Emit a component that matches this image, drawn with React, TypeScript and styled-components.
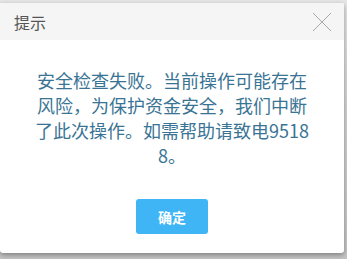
import styled, { createGlobalStyle } from 'styled-components'

const GlobalStyle = createGlobalStyle`
  html, body {
    margin: 0;
    padding: 0;
    background: #cfcfcf;
    font-family: "Microsoft YaHei", "Noto Sans CJK SC", sans-serif;
  }
`

export default function App() {
  return (
    <>
      <GlobalStyle />
      <Overlay>
        <Dialog>
          <Header>
            <HeaderTitle>提示</HeaderTitle>
            <CloseButton aria-label="关闭">
              <svg width="20" height="20" viewBox="0 0 20 20">
                <path d="M1 1 L19 19 M19 1 L1 19" stroke="#a8a8a8" strokeWidth="1" fill="none" />
              </svg>
            </CloseButton>
          </Header>
          <Body>
            <Message>
              安全检查失败。当前操作可能存在风险，为保护资金安全，我们中断了此次操作。如需帮助请致电95188。
            </Message>
            <Footer>
              <ConfirmButton>确定</ConfirmButton>
            </Footer>
          </Body>
        </Dialog>
      </Overlay>
    </>
  )
}

const Overlay = styled.div`
  width: 347px;
  height: 259px;
  padding-top: 3px;
  box-sizing: border-box;
  background: linear-gradient(#e6e6e6, #d4d4d4 40%, #c4c4c4);
  overflow: hidden;
`

const Dialog = styled.div`
  width: 344px;
  height: 250px;
  background: #fff;
  border-radius: 0 2px 3px 3px;
  box-shadow: 0 2px 5px rgba(0, 0, 0, 0.35);
  display: flex;
  flex-direction: column;
  overflow: hidden;
`

const Header = styled.div`
  height: 37px;
  flex: none;
  background: #f5f5f5;
  display: flex;
  align-items: center;
  justify-content: space-between;
  padding: 0 12px 0 14px;
`

const HeaderTitle = styled.span`
  font-size: 16px;
  color: #555;
`

const CloseButton = styled.button`
  border: none;
  background: none;
  padding: 0;
  width: 20px;
  height: 20px;
  display: flex;
  cursor: pointer;
`

const Body = styled.div`
  flex: 1;
  display: flex;
  flex-direction: column;
  align-items: center;
  padding-top: 28px;
`

const Message = styled.p`
  margin: 0;
  width: 278px;
  font-size: 18px;
  line-height: 25px;
  color: #3a7494;
  text-align: center;
  word-break: break-all;
`

const Footer = styled.div`
  margin-top: 31px;
  display: flex;
  justify-content: center;
`

const ConfirmButton = styled.button`
  width: 72px;
  height: 35px;
  border: none;
  border-radius: 3px;
  background: #40b5f6;
  color: #fff;
  font-family: inherit;
  font-size: 14px;
  font-weight: bold;
  cursor: pointer;
`
